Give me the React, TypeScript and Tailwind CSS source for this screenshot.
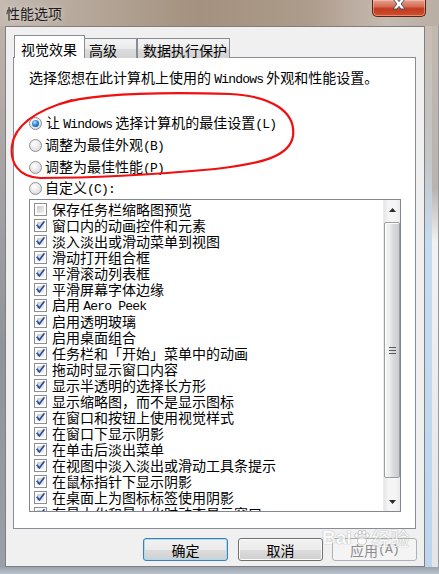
import React from "react";

const Mono = ({ children }: { children: React.ReactNode }) => (
  <span className="font-['Liberation_Mono',monospace] text-[13px] tracking-[-0.8px]">{children}</span>
);

const Radio = ({ checked }: { checked?: boolean }) => (
  <div className="w-[13px] h-[13px] shrink-0 rounded-full border border-[#8e8f8f] bg-[radial-gradient(circle_at_40%_35%,#ffffff_0%,#e6e6e6_55%,#cdcdcd_100%)] flex items-center justify-center">
    {checked && (
      <div className="w-[7px] h-[7px] rounded-full bg-[radial-gradient(circle_at_40%_35%,#bfe6ff_0%,#2a86d8_45%,#0c3f86_100%)]" />
    )}
  </div>
);

const Check = ({ checked }: { checked?: boolean }) => (
  <div className="w-[13px] h-[13px] shrink-0 border border-[#8e8f8f] bg-white p-[2px] relative">
    <div className="w-full h-full bg-[linear-gradient(135deg,#c9cbd0_0%,#eef0f3_100%)]" />
    {checked && (
      <svg className="absolute left-0 top-0" width="11" height="11" viewBox="0 0 11 11">
        <path d="M2.2 5.4 L4.4 8 L8.9 2" stroke="#2a4aa0" strokeWidth="1.7" fill="none" strokeLinecap="square" />
      </svg>
    )}
  </div>
);

const items: [React.ReactNode, boolean][] = [
  ["保存任务栏缩略图预览", false],
  ["窗口内的动画控件和元素", true],
  ["淡入淡出或滑动菜单到视图", true],
  ["滑动打开组合框", true],
  ["平滑滚动列表框", true],
  ["平滑屏幕字体边缘", true],
  [<>启用 <Mono>Aero Peek</Mono></>, true],
  ["启用透明玻璃", true],
  ["启用桌面组合", true],
  ["任务栏和「开始」菜单中的动画", true],
  ["拖动时显示窗口内容", true],
  ["显示半透明的选择长方形", true],
  ["显示缩略图，而不是显示图标", true],
  ["在窗口和按钮上使用视觉样式", true],
  ["在窗口下显示阴影", true],
  ["在单击后淡出菜单", true],
  ["在视图中淡入淡出或滑动工具条提示", true],
  ["在鼠标指针下显示阴影", true],
  ["在桌面上为图标标签使用阴影", true],
  ["在最大化和最小化时动态显示窗口", true],
];

export default function App() {
  return (
    <div className="w-[439px] h-[574px] overflow-hidden relative flex flex-col font-['Noto_Sans_CJK_SC',sans-serif] text-black bg-[linear-gradient(90deg,#c4bab2_0%,#b5a799_20%,#a4917f_45%,#ad9b8b_70%,#c5bab0_88%,#b9aea4_100%)]">
      {/* Title bar */}
      <div className="h-[26px] flex items-start shrink-0">
        <span className="ml-[6px] mt-[5px] text-[14px] leading-[16px] text-[#1c1c1c] [text-shadow:0_0_6px_rgba(255,255,255,0.6)]">
          性能选项
        </span>
        <div className="ml-auto mr-[13px] w-[54px] h-[17px] rounded-b-[5px] border border-t-0 border-[#5b2216] bg-[linear-gradient(180deg,#e6a292_0%,#d46c55_40%,#c23a20_55%,#d0502c_100%)] shadow-[inset_0_0_0_1px_rgba(255,210,190,0.45)] flex justify-center">
          <svg width="18" height="12" viewBox="0 0 18 12" className="mt-[-2px]">
            <path
              d="M3 1 L7 1 L9 3.6 L11 1 L15 1 L11.2 6 L15 11 L11 11 L9 8.4 L7 11 L3 11 L6.8 6 Z"
              fill="#ffffff"
              stroke="#4a4f5a"
              strokeWidth="1"
              strokeLinejoin="round"
            />
          </svg>
        </div>
      </div>

      {/* Middle */}
      <div className="flex h-[541px] shrink-0">
        <div className="w-[5px] bg-[linear-gradient(180deg,#bdb2a8_0%,#a9a5a6_25%,#8f949c_60%,#9aa0a8_100%)]" />
        <div className="w-[420px] bg-[#f0f0f0] border border-[#7f7f7f] pl-[7px] pr-[7px] flex flex-col">
          {/* Tabs */}
          <div className="flex items-end mt-[8px] ml-[1px] h-[23px] relative z-10 text-[14px] leading-[16px]">
            <div className="w-[71px] h-[23px] bg-white border border-b-0 border-[#898c95] pl-[6px] pt-[5px]">视觉效果</div>
            <div className="w-[53px] h-[20px] ml-[-1px] border border-b-0 border-[#898c95] bg-[linear-gradient(180deg,#f4f4f4_0%,#ebebeb_50%,#dcdcdc_51%,#d2d2d2_100%)] pl-[4px] pt-[3px]">高级</div>
            <div className="w-[93px] h-[20px] border border-b-0 border-[#898c95] bg-[linear-gradient(180deg,#f4f4f4_0%,#ebebeb_50%,#dcdcdc_51%,#d2d2d2_100%)] pl-[5px] pt-[3px]">数据执行保护</div>
          </div>
          {/* Panel */}
          <div className="w-[403px] h-[472px] mt-[-1px] bg-white border border-[#898c95] pl-[15px] flex flex-col">
            <div className="mt-[11px] h-[16px] text-[14px] leading-[16px] whitespace-nowrap">
              选择您想在此计算机上使用的 <Mono>Windows</Mono> 外观和性能设置。
            </div>
            <div className="mt-[27px] flex flex-col text-[14px] leading-[16px]">
              <div className="h-[22px] flex items-center gap-[4px]">
                <Radio checked />
                <span>让 <Mono>Windows</Mono> 选择计算机的最佳设置<Mono>(L)</Mono></span>
              </div>
              <div className="h-[22px] flex items-center gap-[3px]">
                <Radio />
                <span>调整为最佳外观<Mono>(B)</Mono></span>
              </div>
              <div className="h-[22px] flex items-center gap-[3px]">
                <Radio />
                <span>调整为最佳性能<Mono>(P)</Mono></span>
              </div>
              <div className="h-[21px] flex items-center gap-[3px]">
                <Radio />
                <span>自定义<Mono>(C):</Mono></span>
              </div>
            </div>
            {/* Listbox */}
            <div className="w-[372px] h-[313px] border border-[#828790] bg-white flex overflow-hidden">
              <div className="flex-1 pt-[1px] pl-[4px] flex flex-col overflow-hidden text-[14px] leading-[16px]">
                {items.map(([label, checked], i) => (
                  <div key={i} className="h-[16px] shrink-0 flex items-center gap-[5px] whitespace-nowrap">
                    <Check checked={checked} />
                    <span>{label}</span>
                  </div>
                ))}
              </div>
              {/* Scrollbar */}
              <div className="w-[17px] shrink-0 flex flex-col bg-[linear-gradient(90deg,#e6e6e6_0%,#f5f5f5_30%,#f5f5f5_70%,#ebebeb_100%)] border-l border-[#ededed]">
                <div className="h-[20px] flex items-center justify-center">
                  <svg width="7" height="4" viewBox="0 0 7 4"><path d="M0 4 L3.5 0 L7 4 Z" fill="#2b2b2b" /></svg>
                </div>
                <div className="h-[256px] mt-[2px] rounded-[2px] border border-[#9a9ca0] bg-[linear-gradient(90deg,#f6f6f6_0%,#ececec_35%,#dadcdf_55%,#c9ccd0_100%)] shadow-[inset_1px_1px_0_#ffffff] flex items-center justify-center">
                  <svg width="7" height="7" viewBox="0 0 7 7">
                    <path d="M0 0.5 H7 M0 3.5 H7 M0 6.5 H7" stroke="#5a5a5a" strokeWidth="1" />
                  </svg>
                </div>
                <div className="flex-1 flex items-end justify-center pb-[7px]">
                  <svg width="7" height="4" viewBox="0 0 7 4"><path d="M0 0 L7 0 L3.5 4 Z" fill="#2b2b2b" /></svg>
                </div>
              </div>
            </div>
          </div>
          {/* Buttons */}
          <div className="mt-[9px] flex justify-end text-[14px] leading-[16px]">
            <button className="w-[85px] h-[23px] rounded-[3px] border border-[#3c7fb1] bg-[linear-gradient(180deg,#f2f2f2_0%,#ebebeb_50%,#dddddd_51%,#cfcfcf_100%)] shadow-[inset_0_0_0_1px_#a6dcf4] flex items-center justify-center">
              确定
            </button>
            <button className="ml-[10px] w-[85px] h-[23px] rounded-[3px] border border-[#707070] bg-[linear-gradient(180deg,#f2f2f2_0%,#ebebeb_50%,#dddddd_51%,#cfcfcf_100%)] shadow-[inset_0_0_0_1px_#fcfcfc] flex items-center justify-center">
              取消
            </button>
            <button className="ml-[9px] w-[85px] h-[23px] rounded-[3px] border border-[#adb2b5] bg-[#f4f4f4] text-[#8c8c8c] flex items-center justify-center">
              应用<Mono>(A)</Mono>
            </button>
          </div>
        </div>
        <div className="w-[7px] bg-[linear-gradient(180deg,#c8beb4_0%,#c4c6c8_25%,#c6dcf0_40%,#bdd6ee_100%)]" />
        <div className="w-[7px] bg-[linear-gradient(180deg,#c2b8ae_0%,#b9b4b0_30%,#f2f2f2_40%,#e4e4e4_100%)] border-r border-[#9a9a9a]" />
      </div>
      <div className="flex-1 bg-[linear-gradient(180deg,#9aa1aa_0%,#b9c4d0_100%)]" />

      {/* Watermark */}
      <div className="absolute left-[322px] top-[528px] pointer-events-none opacity-60 flex items-center text-white [text-shadow:0_0_1px_#8a8a8a,0_0_1px_#8a8a8a] font-['Liberation_Sans',sans-serif]">
        <span className="text-[19px] leading-[20px] font-bold">Bai</span>
        <svg width="18" height="18" viewBox="0 0 18 18" className="mx-[1px]">
          <g fill="#ffffff" stroke="#9a9a9a" strokeWidth="0.8">
            <ellipse cx="9" cy="12" rx="4.5" ry="4" />
            <ellipse cx="3.5" cy="6.5" rx="1.8" ry="2.3" />
            <ellipse cx="7" cy="3.5" rx="1.8" ry="2.3" />
            <ellipse cx="11" cy="3.5" rx="1.8" ry="2.3" />
            <ellipse cx="14.5" cy="6.5" rx="1.8" ry="2.3" />
          </g>
        </svg>
        <span className="text-[19px] leading-[20px] font-['Noto_Sans_CJK_SC',sans-serif]">经验</span>
      </div>

      {/* Red annotation */}
      <svg className="absolute left-0 top-0 pointer-events-none" width="439" height="574" viewBox="0 0 439 574">
        <path
          d="M60 104 C 90 94, 160 92, 230 94 C 272 96, 296 112, 293 136 C 290 156, 262 164, 215 169 C 160 174, 95 178, 40 178 C 18 177, 10 162, 12 146 C 14 128, 30 112, 72 100"
          stroke="#f01010"
          strokeWidth="2.2"
          fill="none"
          strokeLinecap="round"
        />
      </svg>
    </div>
  );
}
